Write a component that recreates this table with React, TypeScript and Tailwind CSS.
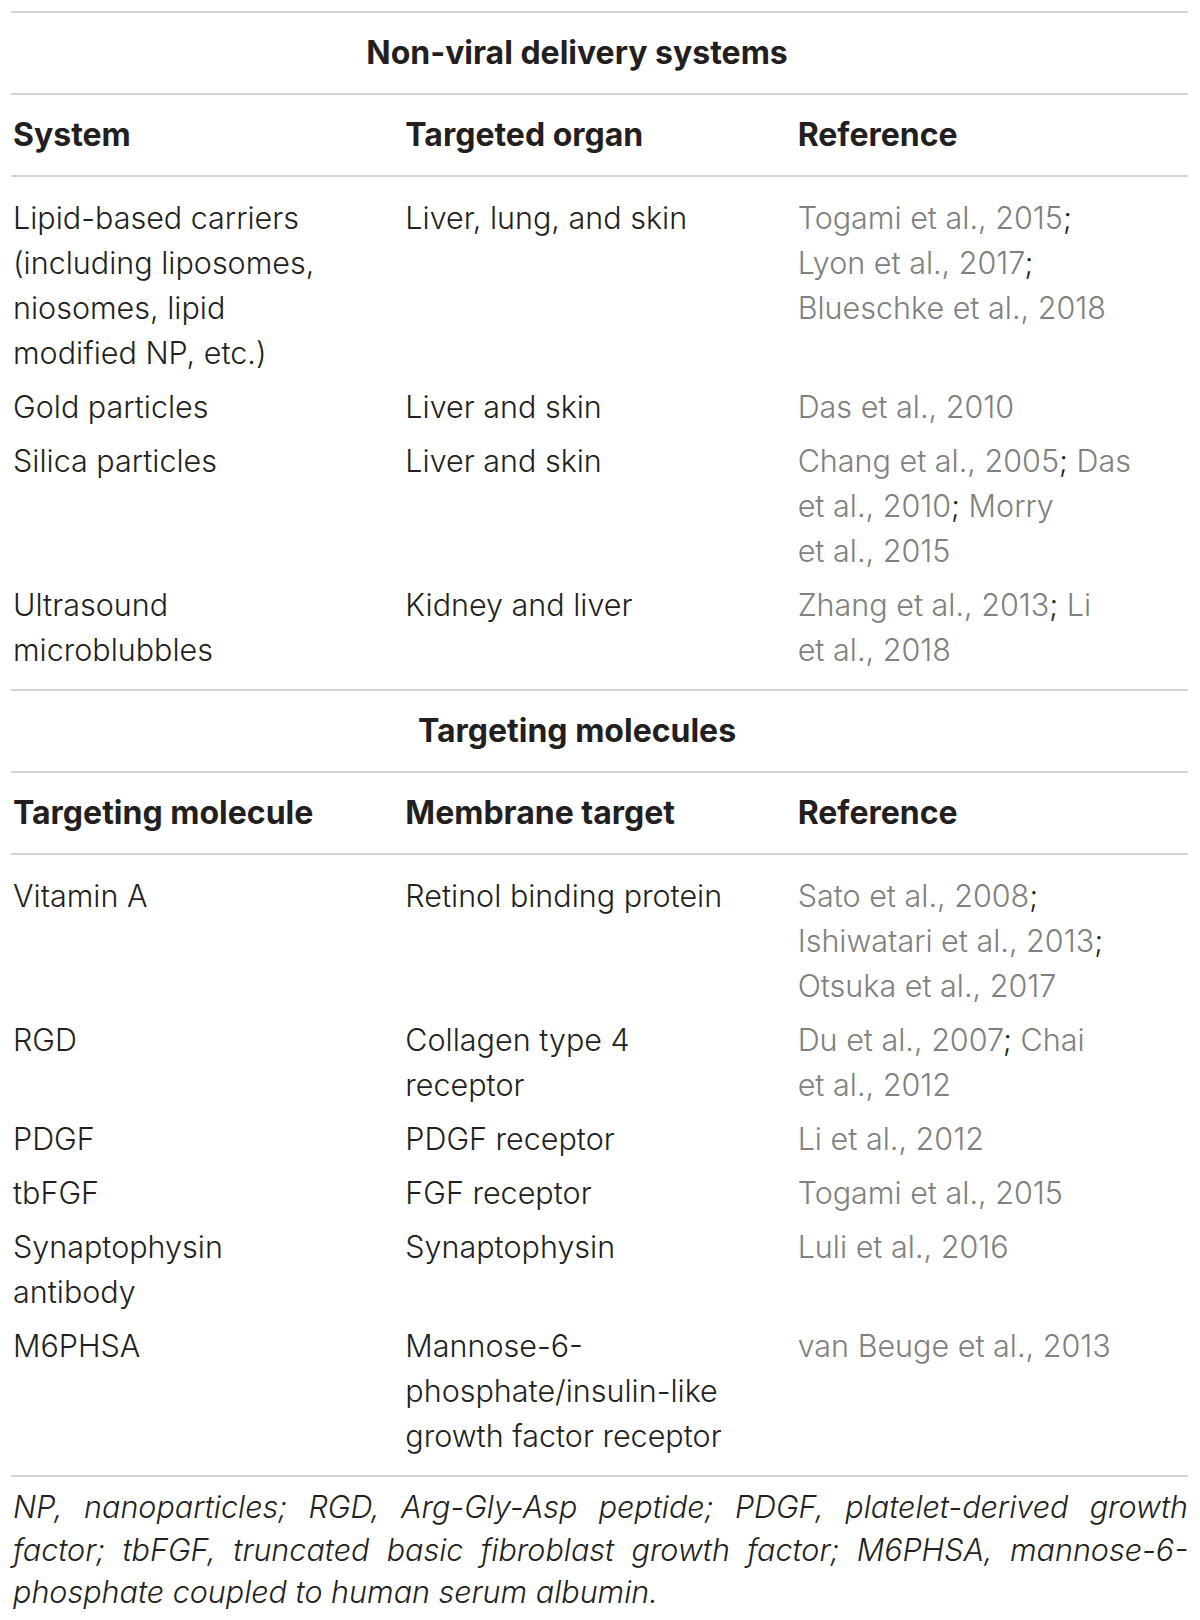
const font = { fontFamily: '"Inter", "Liberation Sans", sans-serif' }

type Row = { a: string[]; b: string[]; c: React.ReactNode[] }

function G({ children }: { children: React.ReactNode }) {
  return <span className="text-[#808080]">{children}</span>
}

const sectionOne: Row[] = [
  {
    a: ['Lipid-based carriers', '(including liposomes,', 'niosomes, lipid', 'modified NP, etc.)'],
    b: ['Liver, lung, and skin'],
    c: [
      <><G>Togami et al., 2015</G>;</>,
      <><G>Lyon et al., 2017</G>;</>,
      <G>Blueschke et al., 2018</G>,
    ],
  },
  { a: ['Gold particles'], b: ['Liver and skin'], c: [<G>Das et al., 2010</G>] },
  {
    a: ['Silica particles'],
    b: ['Liver and skin'],
    c: [
      <><G>Chang et al., 2005</G>; <G>Das</G></>,
      <><G>et al., 2010</G>; <G>Morry</G></>,
      <G>et al., 2015</G>,
    ],
  },
  {
    a: ['Ultrasound', 'microblubbles'],
    b: ['Kidney and liver'],
    c: [<><G>Zhang et al., 2013</G>; <G>Li</G></>, <G>et al., 2018</G>],
  },
]

const sectionTwo: Row[] = [
  {
    a: ['Vitamin A'],
    b: ['Retinol binding protein'],
    c: [
      <><G>Sato et al., 2008</G>;</>,
      <><G>Ishiwatari et al., 2013</G>;</>,
      <G>Otsuka et al., 2017</G>,
    ],
  },
  {
    a: ['RGD'],
    b: ['Collagen type 4', 'receptor'],
    c: [<><G>Du et al., 2007</G>; <G>Chai</G></>, <G>et al., 2012</G>],
  },
  { a: ['PDGF'], b: ['PDGF receptor'], c: [<G>Li et al., 2012</G>] },
  { a: ['tbFGF'], b: ['FGF receptor'], c: [<G>Togami et al., 2015</G>] },
  { a: ['Synaptophysin', 'antibody'], b: ['Synaptophysin'], c: [<G>Luli et al., 2016</G>] },
  {
    a: ['M6PHSA'],
    b: ['Mannose-6-', 'phosphate/insulin-like', 'growth factor receptor'],
    c: [<G>van Beuge et al., 2013</G>],
  },
]

const Rule = () => <div className="h-[2px] bg-[#d4d4d4]" />

function Lines({ items }: { items: React.ReactNode[] }) {
  return (
    <div className="pl-[2px]">
      {items.map((l, i) => (
        <div key={i} className="whitespace-nowrap">{l}</div>
      ))}
    </div>
  )
}

function Section({ title, heads, rows }: { title: string; heads: string[]; rows: Row[] }) {
  return (
    <>
      <div className="flex h-[80px] items-center justify-center pr-[45px] font-bold text-[32px] text-[#231f20]">
        {title}
      </div>
      <Rule />
      <div className="grid h-[80px] grid-cols-3 items-center font-bold text-[32px] text-[#231f20]">
        {heads.map((h) => (
          <div key={h} className="pl-[2px]">{h}</div>
        ))}
      </div>
      <Rule />
      <div className="py-[13px]">
        {rows.map((r, i) => (
          <div key={i} className="grid grid-cols-3 py-[4.5px] text-[30.5px] leading-[45px] font-light text-[#231f20]">
            <Lines items={r.a} />
            <Lines items={r.b} />
            <Lines items={r.c} />
          </div>
        ))}
      </div>
      <Rule />
    </>
  )
}

const footLines = [
  'NP, nanoparticles; RGD, Arg-Gly-Asp peptide; PDGF, platelet-derived growth',
  'factor; tbFGF, truncated basic fibroblast growth factor; M6PHSA, mannose-6-',
]

export default function App() {
  return (
    <div className="min-h-[1620px] w-[1200px] bg-white" style={font}>
      <div className="ml-[11px] w-[1177px] pt-[11px]">
        <Rule />
        <Section
          title="Non-viral delivery systems"
          heads={['System', 'Targeted organ', 'Reference']}
          rows={sectionOne}
        />
        <Section
          title="Targeting molecules"
          heads={['Targeting molecule', 'Membrane target', 'Reference']}
          rows={sectionTwo}
        />
        <div className="pt-[9px] pl-[2px] text-[30.5px] leading-[42.5px] italic font-light text-[#231f20]">
          {footLines.map((l) => (
            <div key={l} className="text-justify [text-align-last:justify]">{l}</div>
          ))}
          <div>phosphate coupled to human serum albumin.</div>
        </div>
      </div>
    </div>
  )
}
